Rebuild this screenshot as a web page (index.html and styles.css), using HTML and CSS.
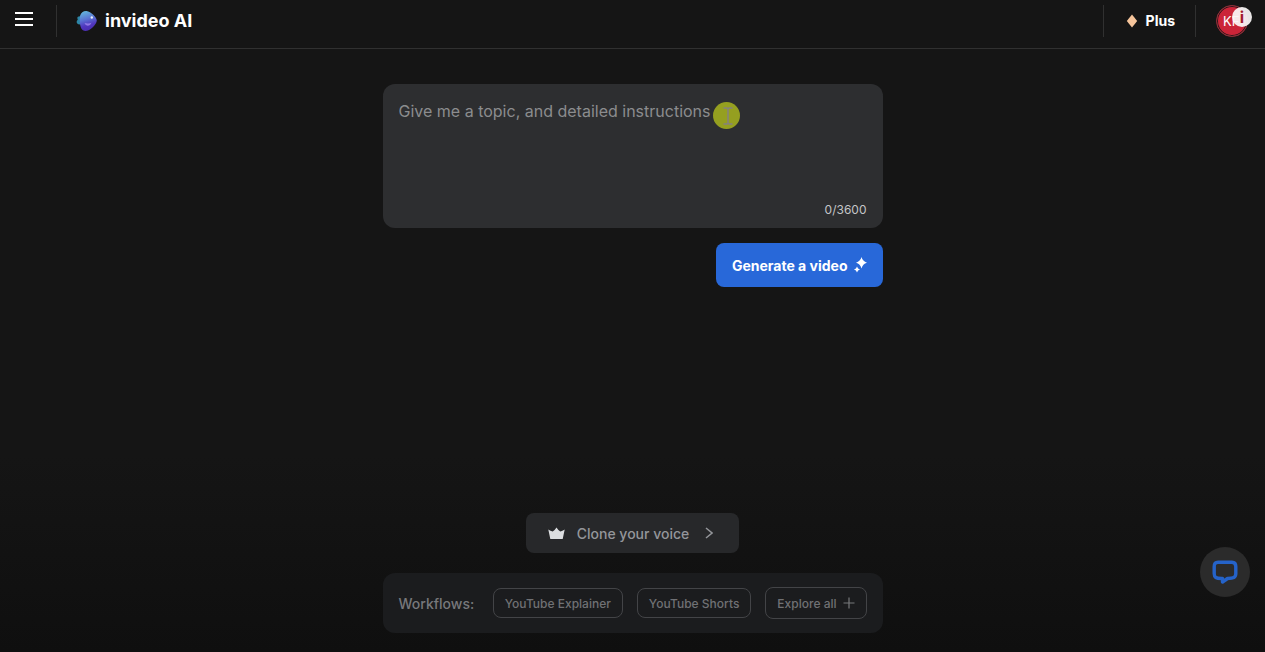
FILE: index.html
```html
<!DOCTYPE html>
<html lang="en">
<head>
    <meta charset="UTF-8">
    <meta name="viewport" content="width=device-width, initial-scale=1.0">
    <title>invideo AI</title>
    <link rel="stylesheet" href="styles.css">
</head>
<body>
    <header class="topbar">
        <button class="menu-btn" type="button" aria-label="Menu">
            <svg width="18" height="16" viewBox="0 0 18 16" fill="none" stroke="#fff" stroke-width="2">
                <path d="M0 2h18M0 8h18M0 14h18"/>
            </svg>
        </button>
        <a class="brand" href="#">
            <svg width="22" height="22" viewBox="0 0 22 22">
                <defs>
                    <linearGradient id="logoFill" x1="0.35" y1="0" x2="0.6" y2="1">
                        <stop offset="0" stop-color="#63b4dc"/>
                        <stop offset="0.4" stop-color="#5a72d2"/>
                        <stop offset="0.7" stop-color="#5036be"/>
                        <stop offset="1" stop-color="#4a2cae"/>
                    </linearGradient>
                </defs>
                <path d="M6 6.500C2 5.500 0.500 7 1.800 9.800C-0.200 11.500 0.500 14 3 14.500L7 14Z" fill="#2c86a6"/>
                <path d="M4 6C5 2.500 7.500 .8 10.500 1C15 1.600 20.800 7.500 20.800 10.500C20.800 14.500 14 21 9.500 21C5.500 20.800 4.300 17 4 13.500C3.700 11 3.600 8.500 4 6Z" fill="url(#logoFill)"/>
                <path d="M8.500 13Q12.500 14 15.500 12.800Q14.500 15.800 11.800 15.700Q9.300 15.500 8.500 13Z" fill="#9078e4"/>
                <circle cx="15.800" cy="7.500" r="1.200" fill="#e8f0ff"/>
            </svg>
            <span>invideo AI</span>
        </a>
        <a class="plan" href="#">
            <svg width="12" height="14" viewBox="0 0 12 14"><path d="M6 .5L11.200 7L6 13.500L.8 7Z" fill="#f6c59b"/></svg>
            <span>Plus</span>
        </a>
        <button class="account" type="button" aria-label="Account">
            <span class="avatar">KF</span>
            <span class="info-badge">i</span>
        </button>
    </header>

    <main class="content">
        <form class="prompt">
            <div class="prompt-box">
                <textarea id="topic" aria-label="Topic and instructions" placeholder="Give me a topic, and detailed instructions"></textarea>
                <span class="counter">0/3600</span>
                <span class="pointer">
                    <svg width="10" height="18" viewBox="0 0 10 18" fill="none" stroke="#85817d" stroke-width="1.500">
                        <path d="M.5 1h3.500l1 1l1-1h3.500M5 2v14M.5 17h3.500l1-1l1 1h3.500"/>
                    </svg>
                </span>
            </div>
            <button class="generate" type="button">
                <span>Generate a video</span>
                <svg width="13" height="16" viewBox="0 0 13 16" fill="#fff">
                    <path d="M7.500 0Q8.600 4.400 13 5.700Q8.600 7 7.500 11.500Q6.400 7 2 5.700Q6.400 4.400 7.500 0Z"/>
                    <path d="M3 9.500Q3.600 11.800 6 12.500Q3.600 13.200 3 15.500Q2.400 13.200 0 12.500Q2.400 11.800 3 9.500Z"/>
                </svg>
            </button>
        </form>

        <button class="clone" type="button">
            <svg width="17" height="13" viewBox="0 0 17 13"><path d="M.3 2.500Q2.500 4.200 4.700 4.500Q7 3 8.500 .5Q10 3 12.300 4.500Q14.500 4.200 16.700 2.500L14.700 12H2.300Z" fill="#dcdee0"/></svg>
            <span>Clone your voice</span>
            <svg class="chevron" width="8" height="12" viewBox="0 0 8 12" fill="none" stroke="#94969a" stroke-width="1.500"><path d="M1 1l6 5l-6 5"/></svg>
        </button>

        <section class="workflows">
            <h2>Workflows:</h2>
            <button class="chip" type="button">YouTube Explainer</button>
            <button class="chip" type="button">YouTube Shorts</button>
            <button class="chip chip-all" type="button">
                Explore all
                <svg width="12" height="12" viewBox="0 0 12 12" stroke="#77787b" stroke-width="1.200"><path d="M6 .5v11M.5 6h11"/></svg>
            </button>
        </section>
    </main>

    <button class="chat" type="button" aria-label="Chat">
        <svg width="26" height="24" viewBox="0 0 26 24" fill="none" stroke="#2563c9" stroke-width="3.400" stroke-linejoin="round">
            <path d="M9.500 18.500C4 18.500 2.200 17.500 2.200 13.500V6.500Q2.200 2.200 6 2.200H20Q23.800 2.200 23.800 6.500V13.500C23.800 17.500 21.500 18.200 15.500 18.500L10.500 22V18.500Z"/>
        </svg>
    </button>
</body>
</html>
```

FILE: styles.css
```css
* {
    box-sizing: border-box;
}
body {
    margin: 0;
    min-height: 100vh;
    display: flex;
    flex-direction: column;
    font-family: Inter, "Liberation Sans", sans-serif;
    color: #ffffff;
    background: linear-gradient(#151515 0, #151515 70%, #0f0f0f 100%);
}
button {
    font-family: inherit;
    border: none;
    cursor: pointer;
}
svg {
    display: block;
    flex: none;
}
.topbar {
    display: flex;
    align-items: center;
    padding: 5px 17px 11px 0;
    border-bottom: 1px solid #303030;
}
.menu-btn {
    height: 32px;
    width: 57px;
    padding: 0 0 4px 15px;
    background: none;
    border-right: 1px solid #303030;
}
.brand {
    display: flex;
    align-items: center;
    gap: 7px;
    margin-left: 19px;
    margin-right: auto;
    font-size: 18px;
    font-weight: 700;
    line-height: 20px;
    color: #ffffff;
    text-decoration: none;
}
.plan {
    display: flex;
    align-items: center;
    gap: 8px;
    height: 32px;
    padding: 0 20px 0 22px;
    border-left: 1px solid #303030;
    border-right: 1px solid #303030;
    font-size: 14px;
    font-weight: 700;
    line-height: 18px;
    color: #ffffff;
    text-decoration: none;
}
.account {
    position: relative;
    margin-left: 20px;
    padding: 0;
    background: none;
}
.avatar {
    display: block;
    width: 32px;
    height: 32px;
    border: 1px solid #86323a;
    border-radius: 50%;
    background-color: #cb2438;
    box-shadow: inset 0 0 0 1px #2a1517;
    color: #ffffff;
    font-size: 13px;
    line-height: 30px;
    text-align: left;
    padding-left: 6px;
}
.info-badge {
    position: absolute;
    top: 2px;
    right: -4px;
    width: 20px;
    height: 20px;
    border-radius: 50%;
    background-color: rgba(250, 246, 246, 0.93);
    color: #a11c2c;
    font-size: 16px;
    font-weight: 700;
    line-height: 20px;
}
.content {
    flex: 1;
    display: flex;
    flex-direction: column;
    align-items: center;
    width: 100%;
    max-width: 500px;
    margin: 0 auto;
    padding: 35px 0 19px;
}
.prompt {
    display: flex;
    flex-direction: column;
    align-items: flex-end;
    gap: 15px;
    width: 100%;
    margin-bottom: auto;
}
.prompt-box {
    position: relative;
    display: flex;
    flex-direction: column;
    width: 100%;
    padding: 16px 16px 9px;
    border-radius: 12px;
    background-color: #2d2e30;
}
.prompt-box textarea {
    height: 101px;
    padding: 0;
    border: none;
    outline: none;
    resize: none;
    background: none;
    color: #ffffff;
    font-family: inherit;
    font-size: 16px;
    line-height: 22px;
}
.prompt-box textarea::placeholder {
    color: #8b8c8e;
}
.counter {
    align-self: flex-end;
    font-size: 12px;
    line-height: 18px;
    color: #c4c5c7;
}
.pointer {
    position: absolute;
    top: 18px;
    left: 330px;
    display: flex;
    align-items: center;
    justify-content: center;
    width: 27px;
    height: 27px;
    padding-left: 3px;
    border-radius: 50%;
    background-color: #959f20;
}
.generate {
    display: flex;
    align-items: center;
    gap: 6px;
    height: 44px;
    padding: 0 16px;
    border-radius: 8px;
    background-color: #2868d9;
    color: #ffffff;
    font-size: 14px;
    font-weight: 700;
}
.clone {
    display: flex;
    align-items: center;
    gap: 12px;
    height: 40px;
    margin-bottom: 20px;
    padding: 0 26px 0 22px;
    border-radius: 8px;
    background-color: #27282a;
    color: #94969a;
    font-size: 14px;
    font-weight: 500;
}
.chevron {
    margin-left: 4px;
}
.workflows {
    display: flex;
    align-items: center;
    gap: 14px;
    width: 100%;
    height: 60px;
    padding: 0 16px;
    border-radius: 12px;
    background-color: #1b1c1e;
}
.workflows h2 {
    margin: 0 auto 0 0;
    font-size: 14px;
    font-weight: 500;
    color: #77787b;
}
.chip {
    height: 30px;
    padding: 0 11px;
    border: 1px solid #434447;
    border-radius: 8px;
    background: none;
    color: #707174;
    font-size: 12px;
    font-weight: 500;
}
.chip-all {
    display: flex;
    align-items: center;
    gap: 6px;
    height: 32px;
}
.chat {
    position: fixed;
    right: 15px;
    bottom: 55px;
    display: flex;
    align-items: center;
    justify-content: center;
    width: 50px;
    height: 50px;
    border-radius: 50%;
    background-color: #2b2b2b;
}
```
